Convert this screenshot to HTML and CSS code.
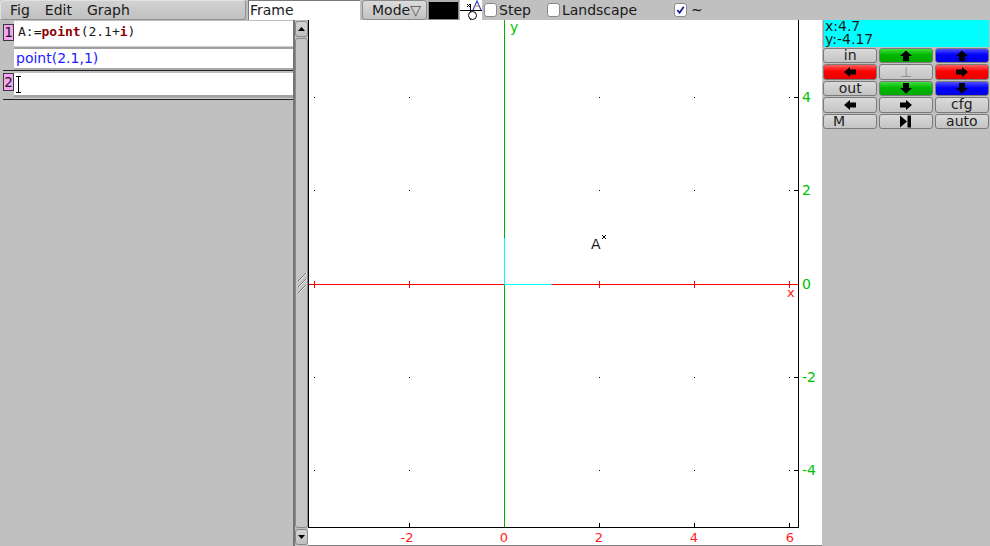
FILE: index.html
```html
<!DOCTYPE html>
<html>
<head>
<meta charset="utf-8">
<link rel="stylesheet" href="styles.css">
</head>
<body>
<div class="app">
  <div class="topbar">
    <div class="menubar"><span>Fig</span><span>Edit</span><span>Graph</span></div>
    <div class="frame-input">Frame</div>
    <div class="mode-btn">Mode<span class="tri">▽</span></div>
    <div class="color-box"></div>
    <div class="fig-icon">
      <svg width="22" height="20" viewBox="0 0 22 20">
        <line x1="0" y1="10.5" x2="22" y2="10.5" stroke="#000"/>
        <line x1="10.5" y1="4" x2="10.5" y2="20" stroke="#000"/>
        <polyline points="13,10 17,1 21,10" fill="none" stroke="#2a50d0" stroke-width="1.2"/>
        <line x1="15" y1="6" x2="19" y2="6" stroke="#d08020"/>
        <line x1="7" y1="4" x2="10" y2="7" stroke="#000"/>
        <line x1="10" y1="4" x2="7" y2="7" stroke="#000"/>
        <circle cx="12.5" cy="15.5" r="4" fill="#fff" stroke="#000"/>
      </svg>
    </div>
    <label class="chk step"><span class="box"></span>Step</label>
    <label class="chk landscape"><span class="box"></span>Landscape</label>
    <label class="chk tilde"><span class="box"><svg width="12" height="12" viewBox="0 0 12 12"><path d="M2.5 6 L5 9 L9.5 2.5" fill="none" stroke="#1c1c9c" stroke-width="2"/></svg></span>~</label>
  </div>

  <div class="main">
    <div class="session">
      <div class="entry">
        <div class="entry-head h1">
          <span class="num">1</span>
          <div class="input">A:=<b>point</b>(2.1+<b>i</b>)</div>
        </div>
        <div class="splitter"></div>
        <div class="output">point(2.1,1)</div>
        <div class="out-line"></div>
        <div class="rule"></div>
      </div>
      <div class="entry entry2">
        <div class="entry-head h2">
          <span class="num">2</span>
          <div class="input"><svg class="ibeam" width="5" height="17" viewBox="0 0 5 17"><path d="M0 0.5 H5 M2.5 0 V17 M0 16.5 H5" stroke="#000" fill="none"/></svg></div>
        </div>
        <div class="bar"></div>
        <div class="rule"></div>
      </div>
    </div>

    <div class="scrollbar">
      <div class="sb-btn"><svg width="7" height="4" viewBox="0 0 7 4"><path d="M0 4 L3.5 0 L7 4 Z" fill="#000"/></svg></div>
      <div class="sb-thumb">
        <svg width="10" height="20" viewBox="0 0 10 20">
          <path d="M1 8 L9 0 M1 14 L9 6 M1 20 L9 12" stroke="#707070" stroke-width="1"/>
          <path d="M2 8 L10 0 M2 14 L10 6 M2 20 L10 12" stroke="#eeeeee" stroke-width="1"/>
        </svg>
      </div>
      <div class="sb-btn"><svg width="7" height="4" viewBox="0 0 7 4"><path d="M0 0 L3.5 4 L7 0 Z" fill="#000"/></svg></div>
    </div>

    <div class="graph">
      <svg class="plot" width="514" height="525" viewBox="0 0 514 525">
        <g fill="#000">
          <rect x="6" y="77" width="1" height="1"/><rect x="101" y="77" width="1" height="1"/><rect x="291" y="77" width="1" height="1"/><rect x="386" y="77" width="1" height="1"/><rect x="481" y="77" width="1" height="1"/>
          <rect x="6" y="170" width="1" height="1"/><rect x="101" y="170" width="1" height="1"/><rect x="291" y="170" width="1" height="1"/><rect x="386" y="170" width="1" height="1"/><rect x="481" y="170" width="1" height="1"/>
          <rect x="6" y="357" width="1" height="1"/><rect x="101" y="357" width="1" height="1"/><rect x="291" y="357" width="1" height="1"/><rect x="386" y="357" width="1" height="1"/><rect x="481" y="357" width="1" height="1"/>
          <rect x="6" y="450" width="1" height="1"/><rect x="101" y="450" width="1" height="1"/><rect x="291" y="450" width="1" height="1"/><rect x="386" y="450" width="1" height="1"/><rect x="481" y="450" width="1" height="1"/>
        </g>
        <line x1="0" y1="264.5" x2="490" y2="264.5" stroke="#ff0000"/>
        <g stroke="#ff0000">
          <line x1="6.5" y1="261" x2="6.5" y2="268"/>
          <line x1="101.5" y1="261" x2="101.5" y2="268"/>
          <line x1="291.5" y1="261" x2="291.5" y2="268"/>
          <line x1="386.5" y1="261" x2="386.5" y2="268"/>
          <line x1="481.5" y1="261" x2="481.5" y2="268"/>
        </g>
        <line x1="196.5" y1="0" x2="196.5" y2="507" stroke="#00b000"/>
        <line x1="196" y1="264.5" x2="243.5" y2="264.5" stroke="#00ffff"/>
        <line x1="196.5" y1="264" x2="196.5" y2="218" stroke="#00ffff"/>
        <g stroke="#000">
          <line x1="0.5" y1="0" x2="0.5" y2="508"/>
          <line x1="490.5" y1="0" x2="490.5" y2="508"/>
          <line x1="0" y1="507.5" x2="491" y2="507.5"/>
          <line x1="101.5" y1="503" x2="101.5" y2="507"/>
          <line x1="291.5" y1="503" x2="291.5" y2="507"/>
          <line x1="386.5" y1="503" x2="386.5" y2="507"/>
          <line x1="481.5" y1="503" x2="481.5" y2="507"/>
          <line x1="486" y1="77.5" x2="490" y2="77.5"/>
          <line x1="486" y1="170.5" x2="490" y2="170.5"/>
          <line x1="486" y1="357.5" x2="490" y2="357.5"/>
          <line x1="486" y1="450.5" x2="490" y2="450.5"/>
          <line x1="294" y1="215" x2="298" y2="219"/>
          <line x1="298" y1="215" x2="294" y2="219"/>
        </g>
        <g class="lbl-x" text-anchor="middle">
          <text x="99" y="522">-2</text>
          <text x="196" y="522">0</text>
          <text x="291" y="522">2</text>
          <text x="386" y="522">4</text>
          <text x="482" y="522">6</text>
        </g>
        <g class="lbl-y">
          <text x="494" y="82">4</text>
          <text x="494" y="175">2</text>
          <text x="494" y="269">0</text>
          <text x="494" y="362">-2</text>
          <text x="494" y="455">-4</text>
        </g>
        <text class="axis-x" x="479" y="277">x</text>
        <text class="axis-y" x="202" y="12">y</text>
        <text class="pt-label" x="283" y="229">A</text>
      </svg>
    </div>

    <div class="side">
      <div class="coords"><div class="cline">x:4.7</div><div class="cline">y:-4.17</div></div>
      <div class="pad">
        <div class="btn">in</div>
        <div class="btn green"><svg class="arr" width="14" height="12" viewBox="0 0 14 12"><polygon points="7,0.5 13,6 10,6 10,11 4,11 4,6 1,6"/></svg></div>
        <div class="btn blue"><svg class="arr" width="14" height="12" viewBox="0 0 14 12"><polygon points="7,0.5 13,6 10,6 10,11 4,11 4,6 1,6"/></svg></div>

        <div class="btn red"><svg class="arr" width="14" height="12" viewBox="0 0 14 12"><polygon points="1,6 7,1 7,3.5 13,3.5 13,8.5 7,8.5 7,11"/></svg></div>
        <div class="btn dim">⊥</div>
        <div class="btn red"><svg class="arr" width="14" height="12" viewBox="0 0 14 12"><polygon points="13,6 7,1 7,3.5 1,3.5 1,8.5 7,8.5 7,11"/></svg></div>

        <div class="btn">out</div>
        <div class="btn green"><svg class="arr" width="14" height="12" viewBox="0 0 14 12"><polygon points="7,11.5 13,6 10,6 10,1 4,1 4,6 1,6"/></svg></div>
        <div class="btn blue"><svg class="arr" width="14" height="12" viewBox="0 0 14 12"><polygon points="7,11.5 13,6 10,6 10,1 4,1 4,6 1,6"/></svg></div>

        <div class="btn"><svg class="arr" width="14" height="12" viewBox="0 0 14 12"><polygon points="1,6 7,1 7,3.5 13,3.5 13,8.5 7,8.5 7,11"/></svg></div>
        <div class="btn"><svg class="arr" width="14" height="12" viewBox="0 0 14 12"><polygon points="13,6 7,1 7,3.5 1,3.5 1,8.5 7,8.5 7,11"/></svg></div>
        <div class="btn">cfg</div>

        <div class="btn left">M</div>
        <div class="btn"><svg class="arr" width="13" height="13" viewBox="0 0 13 13"><polygon points="1,0.5 8,6.5 1,12.5"/><rect x="8.5" y="0.5" width="3.5" height="12"/></svg></div>
        <div class="btn">auto</div>
      </div>
    </div>
  </div>
</div>
</body>
</html>
```

FILE: styles.css
```css
* { box-sizing: border-box; }
html, body { margin: 0; padding: 0; }
body {
  width: 990px;
  height: 546px;
  overflow: hidden;
  background: #c0c0c0;
  font-family: "DejaVu Sans", sans-serif;
  font-size: 14px;
  color: #1a1a1a;
}
.app { display: flex; flex-direction: column; width: 990px; height: 546px; }

/* top bar */
.topbar { display: flex; align-items: center; height: 20px; }
.topbar > * { flex-shrink: 0; }
.menubar {
  width: 246px; height: 20px;
  display: flex; align-items: center; gap: 15px;
  padding-left: 9px;
  background: linear-gradient(#d2d2d2, #c0c0c0);
  border: 1px solid #909090;
  border-top-color: #e0e0e0;
  border-left-color: #e0e0e0;
  border-radius: 3px;
  line-height: 18px;
}
.frame-input {
  margin-left: 2px;
  width: 112px; height: 20px;
  background: #fff;
  border-top: 1px solid #7a7a7a;
  border-left: 1px solid #7a7a7a;
  padding-left: 1px;
  line-height: 19px;
}
.mode-btn {
  margin-left: 2px;
  width: 65px; height: 20px;
  border: 1px solid #8a8a8a;
  border-radius: 3px;
  background: linear-gradient(#dcdcdc, #c2c2c2);
  padding-left: 9px;
  line-height: 18px;
  color: #1a1a1a;
}
.mode-btn .tri { color: #505050; }
.color-box {
  margin-left: 1px;
  width: 31px; height: 20px;
  background: #000;
  border: 1px solid #8a8a8a;
  border-top: 2px solid #b0b0b0;
}
.fig-icon {
  margin-left: 1px;
  width: 22px; height: 20px;
  background: #ffffff;
}
.fig-icon svg { display: block; }
.chk { display: flex; align-items: center; gap: 2px; line-height: 18px; }
.chk .box {
  width: 13px; height: 14px;
  background: #fff;
  border: 1px solid #8a8a8a;
  border-radius: 3px;
  display: flex; align-items: center; justify-content: center;
}
.chk .box svg { display: block; }
.step { margin-left: 2px; }
.landscape { margin-left: 16px; }
.tilde { margin-left: 37px; gap: 4px; }

/* main */
.main { display: flex; height: 526px; }

.session { width: 293px; padding-top: 1px; }
.entry-head { display: flex; }
.h1 { height: 25px; }
.h2 { height: 22px; }
.num {
  margin: 3px 0 0 3px;
  width: 11px; height: 17px;
  background: #f7a6f5;
  border: 1px solid #3a3a3a;
  font-family: "DejaVu Sans Mono", monospace;
  font-size: 14px;
  line-height: 15px;
  text-align: center;
  color: #1a1a1a;
}
.h2 .num { margin-top: 0; height: 18px; line-height: 17px; }
.input {
  flex: 1;
  background: #fff;
  font-family: "DejaVu Sans Mono", monospace;
  font-size: 13px;
  line-height: 15px;
  padding: 3px 0 0 4px;
  color: #1a1a1a;
}
.input b { color: #8c0000; }
.ibeam { display: block; margin: 0 0 0 1px; }
.h2 .input { padding: 3px 0 0 1px; }
.splitter {
  margin-left: 14px;
  height: 3px;
  background: #a0a0a0;
  border-top: 1px solid #d0d0d0;
}
.output {
  margin-left: 14px;
  height: 19px;
  background: #fff;
  color: #1c1cff;
  font-size: 14px;
  line-height: 19px;
  padding-left: 2px;
}
.out-line { margin-left: 14px; height: 2px; background: #a8a8a8; }
.rule { margin-left: 3px; height: 1px; background: #202020; }
.entry2 { margin-top: 2px; }
.bar {
  margin-left: 14px;
  height: 4px;
  background: #a4a4a4;
  border-bottom: 1px solid #d0d0d0;
}

/* scrollbar */
.scrollbar {
  width: 15px;
  display: flex; flex-direction: column;
  border-left: 2px solid #767676;
  background: #c0c0c0;
  padding: 1px 0 1px 0;
}
.sb-btn {
  height: 16px;
  border: 1px solid #8a8a8a;
  border-radius: 3px;
  background: linear-gradient(#d4d4d4, #c0c0c0);
  display: flex; align-items: center; justify-content: center;
}
.sb-thumb {
  flex: 1;
  margin: 1px 0;
  border: 1px solid #8a8a8a;
  border-radius: 3px;
  background: #c6c6c6;
  display: flex; align-items: center; justify-content: center;
}
.sb-btn svg, .sb-thumb svg { display: block; }

/* graph */
.graph {
  width: 514px; height: 526px;
  background: #fff;
  border-bottom: 1px solid #808080;
}
.plot { display: block; font-family: "DejaVu Sans", sans-serif; }
.lbl-x text { font-size: 13px; fill: #ff1a1a; }
.lbl-y text { font-size: 14px; fill: #00c000; }
.axis-x { font-size: 13px; fill: #ff1a1a; }
.axis-y { font-size: 14px; fill: #00c000; }
.pt-label { font-size: 14px; fill: #202020; }

/* side panel */
.side { width: 168px; padding: 0 1px 0 1px; display: flex; flex-direction: column; }
.coords {
  height: 27px;
  background: #00ffff;
  font-size: 14px;
  padding-left: 1px;
  overflow: hidden;
  color: #1a1a1a;
  border-left: 1px solid #8aa;
}
.cline { height: 13px; line-height: 13px; }
.pad {
  margin-top: 1px;
  display: grid;
  grid-template-columns: repeat(3, 1fr);
  grid-auto-rows: 15.4px;
  column-gap: 1.5px;
  row-gap: 1px;
}
.btn {
  border: 1px solid #7a7a7a;
  border-radius: 3px;
  background: linear-gradient(#dadada, #c4c4c4);
  display: flex; align-items: center; justify-content: center;
  font-size: 14px;
  line-height: 13px;
  color: #202020;
}
.btn.left { justify-content: flex-start; padding-left: 9px; }
.btn.dim { color: #8a8a8a; }
.btn.green { background: linear-gradient(#40e040, #00b800 45%, #00a800); }
.btn.blue { background: linear-gradient(#5050ff, #0000ff 45%, #0000e0); }
.btn.red { background: linear-gradient(#ff6060, #ff0000 45%, #e80000); }
.arr { display: block; fill: #000; }
```
